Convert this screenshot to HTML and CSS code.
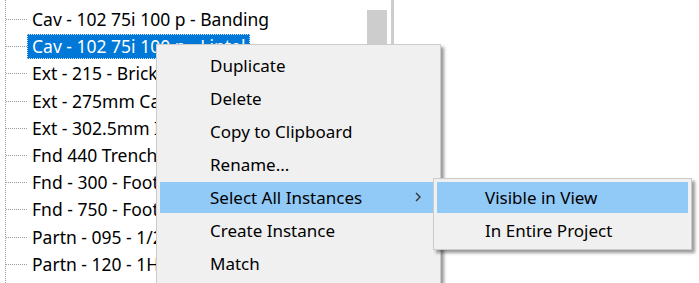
FILE: index.html
```html
<!DOCTYPE html>
<html lang="en">
<head>
  <meta charset="UTF-8">
  <title>Tree context menu</title>
  <link rel="stylesheet" href="styles.css">
</head>
<body>
  <div class="panel">
    <div class="tree">
      <div class="tree-lines">
        <div class="row"><span class="branch"></span><span class="label">Cav - 102 75i 100 p - Banding</span></div>
        <div class="row"><span class="branch"></span><span class="label selected">Cav - 102 75i 100 p - Lintel</span></div>
        <div class="row"><span class="branch"></span><span class="label">Ext - 215 - Brick/Block</span></div>
        <div class="row"><span class="branch"></span><span class="label">Ext - 275mm Cavity Wall</span></div>
        <div class="row"><span class="branch"></span><span class="label">Ext - 302.5mm Insulated</span></div>
        <div class="row"><span class="branch"></span><span class="label">Fnd 440 Trench Fill</span></div>
        <div class="row"><span class="branch"></span><span class="label">Fnd - 300 - Footing</span></div>
        <div class="row"><span class="branch"></span><span class="label">Fnd - 750 - Footing</span></div>
        <div class="row"><span class="branch"></span><span class="label">Partn - 095 - 1/2hr</span></div>
        <div class="row"><span class="branch"></span><span class="label">Partn - 120 - 1Hr</span></div>
      </div>
    </div>
    <div class="scrollbar"><div class="thumb"></div></div>
  </div>

  <!-- context menu sits over the tree -->
  <ul class="menu main-menu">
    <li>Duplicate</li>
    <li>Delete</li>
    <li>Copy to Clipboard</li>
    <li>Rename...</li>
    <li class="active has-sub">Select All Instances
      <svg class="arrow" width="6" height="10" viewBox="0 0 6 10"><polyline points="1,1 5,5 1,9" fill="none" stroke="#333" stroke-width="1.4"/></svg>
    </li>
    <li>Create Instance</li>
    <li>Match</li>
  </ul>

  <ul class="menu sub-menu">
    <li class="active">Visible in View</li>
    <li>In Entire Project</li>
  </ul>
</body>
</html>
```

FILE: styles.css
```css
* {
  margin: 0;
  padding: 0;
  box-sizing: border-box;
}

body {
  font-family: 'Noto Sans', 'Open Sans', sans-serif;
  font-size: 17px;
  color: #000;
  background: #fff;
  width: 699px;
  height: 283px;
  overflow: hidden;
  position: relative;
}

.panel {
  display: flex;
  height: 283px;
}

.tree {
  width: 365px;
  padding-left: 5px;
  overflow: hidden;
}

.tree-lines {
  border-left: 1px dotted #9a9a9a;
  height: 100%;
  padding-top: 6px;
}

.row {
  display: flex;
  align-items: center;
  height: 27.2px;
  white-space: nowrap;
  font-size: 17.5px;
}

.branch {
  width: 21px;
  border-top: 1px dotted #9a9a9a;
}

.label {
  padding: 0 5px;
  line-height: 25px;
}

.label.selected {
  background: #0078d7;
  color: #fff;
  outline: 1px dotted #cfe4f7;
  outline-offset: -1px;
}

.scrollbar {
  width: 29px;
  padding: 10px 4px 0 2px;
  border-right: 3px solid #cdcdcd;
}

.thumb {
  height: 35px;
  background: #cdcdcd;
}

.menu {
  position: absolute;
  list-style: none;
  display: flex;
  flex-direction: column;
  gap: 2px;
  background: #f0f0f0;
  border: 1px solid #cccccc;
  box-shadow: 3px 3px 3px rgba(0, 0, 0, 0.4);
}

.main-menu {
  left: 156px;
  top: 44px;
  width: 285px;
  padding: 4.5px 0;
}

.sub-menu {
  left: 433px;
  top: 178px;
  width: 259px;
  padding: 2.5px 0 3.5px;
}

.menu li {
  display: flex;
  align-items: center;
  flex-shrink: 0;
  height: 31px;
  margin: 0 3px;
  padding-left: 50px;
  white-space: nowrap;
}

.sub-menu li {
  padding-left: 48px;
}

.menu li.active {
  background: #91c9f7;
}

.has-sub {
  justify-content: space-between;
  padding-right: 16px;
}
```
